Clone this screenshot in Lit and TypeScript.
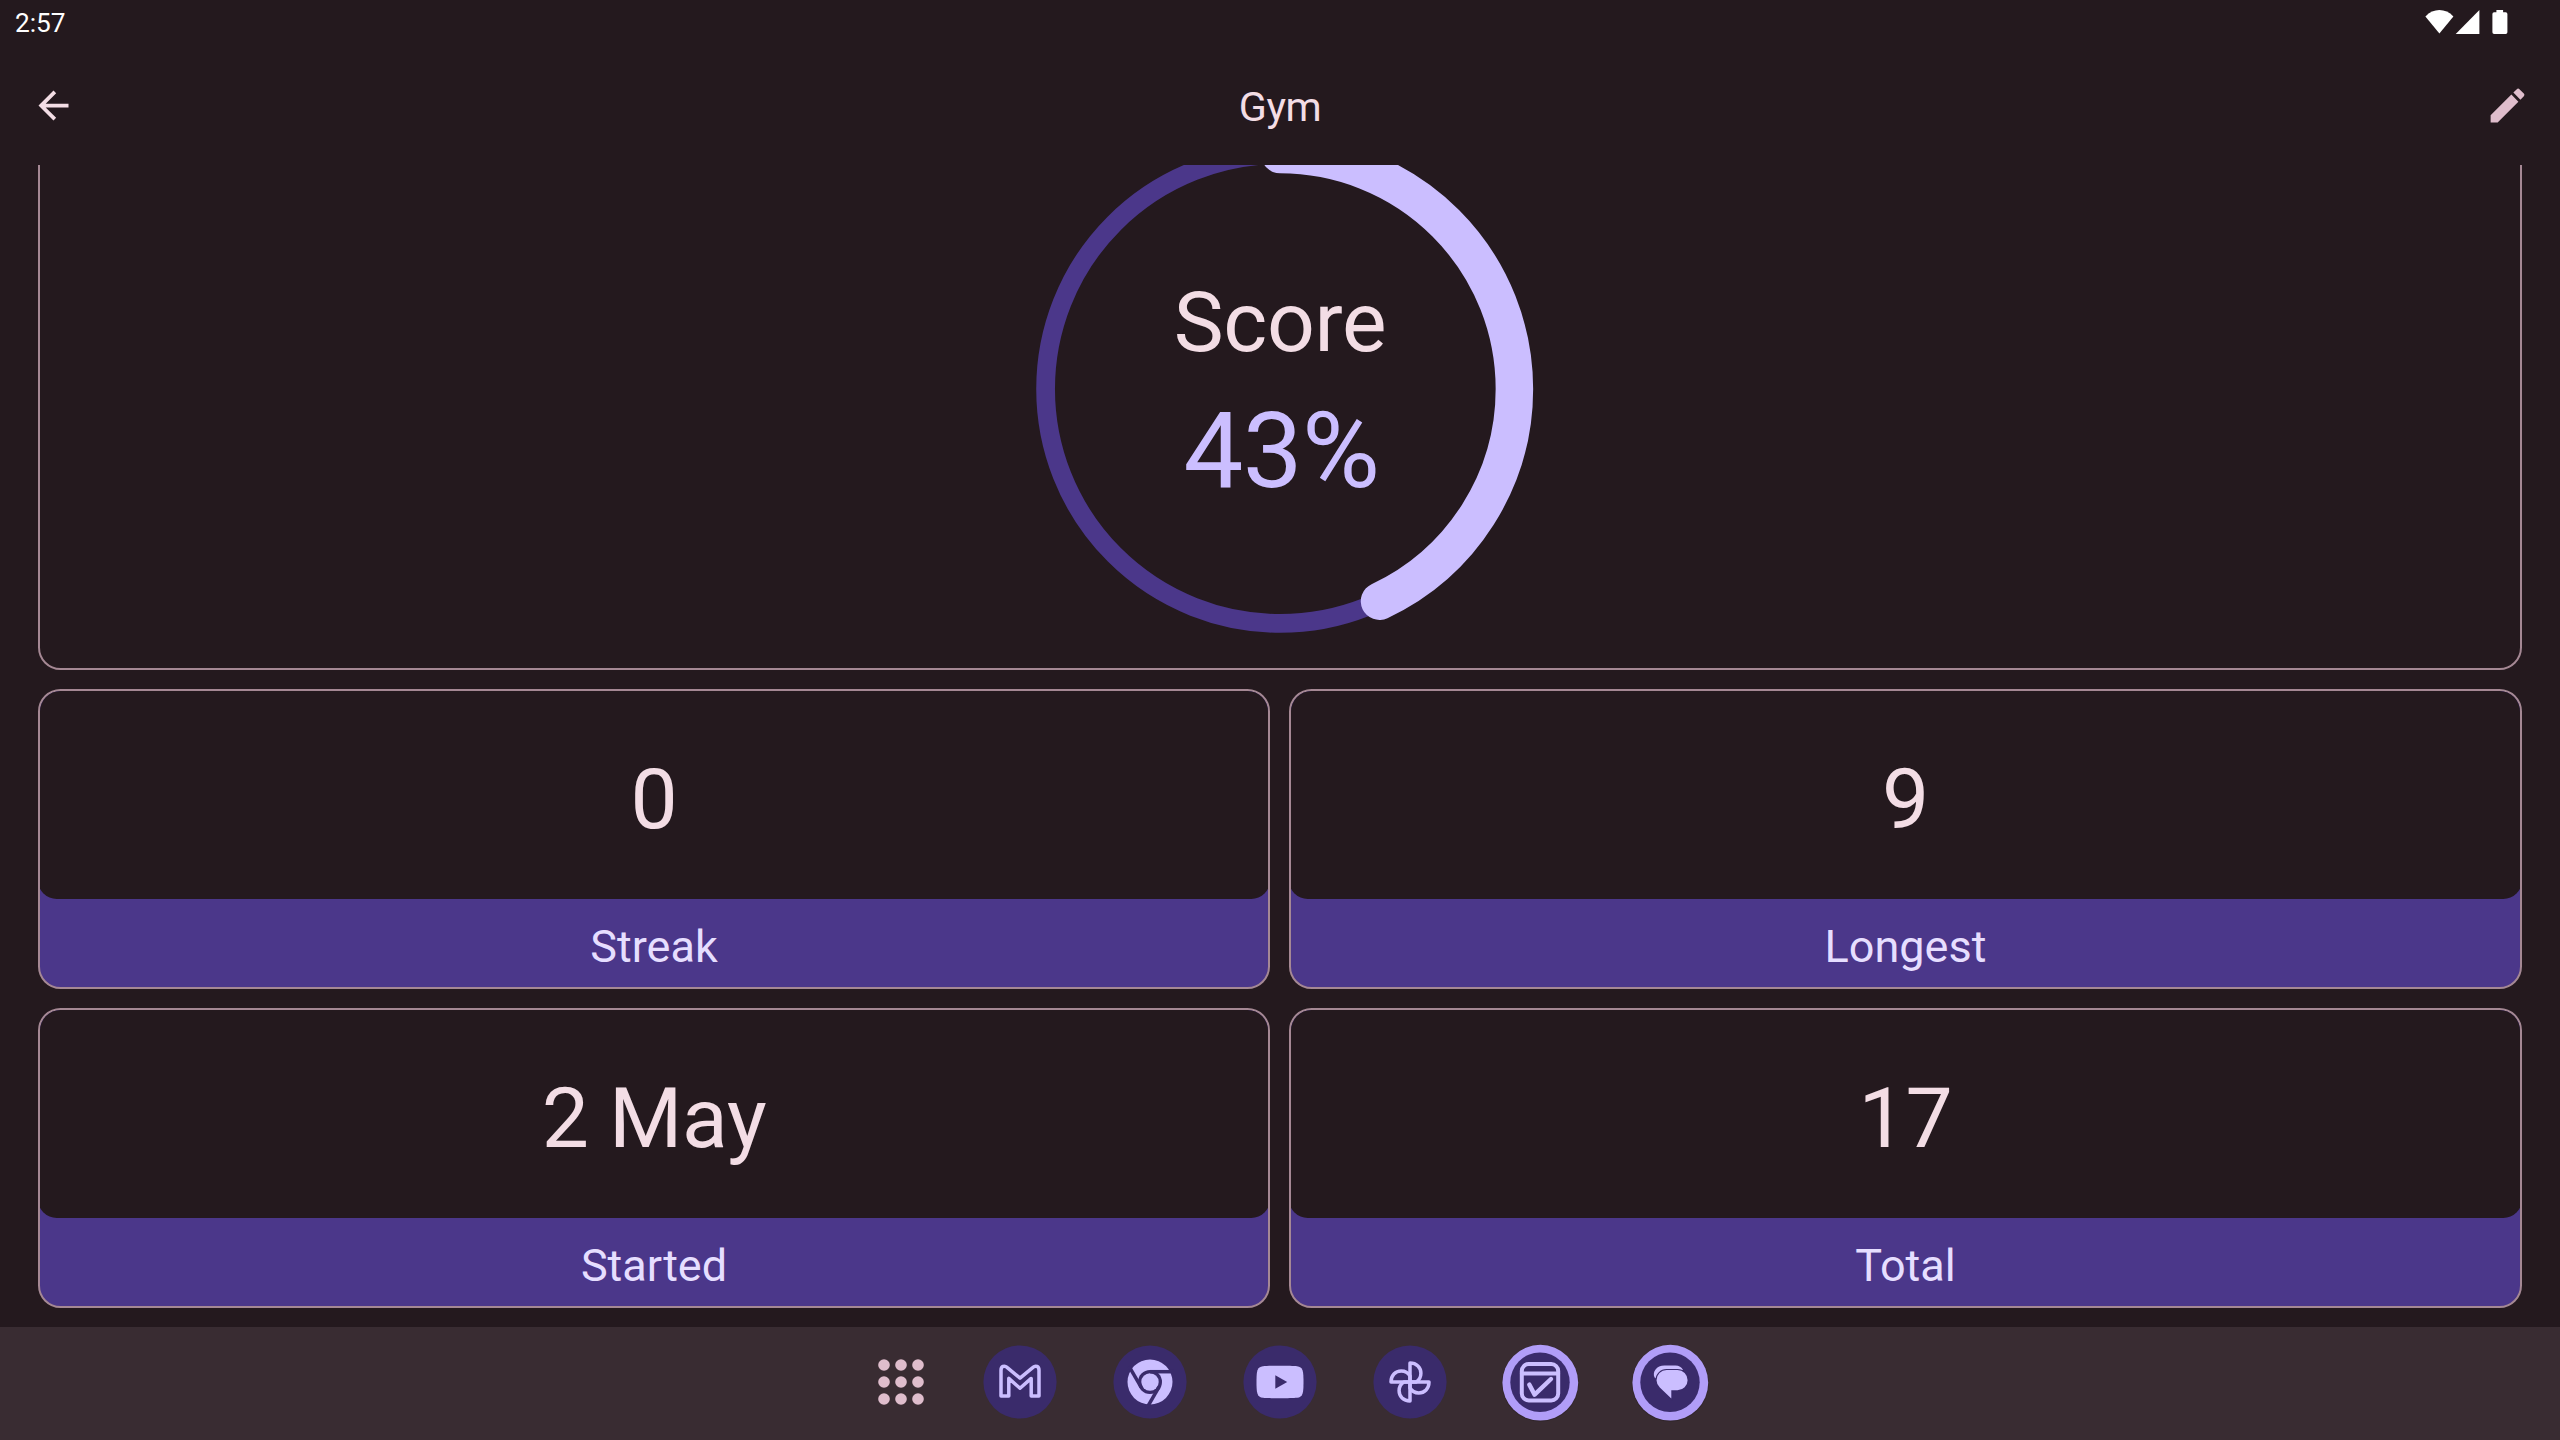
import { LitElement, html, css, svg } from "lit";
import { customElement, property } from "lit/decorators.js";

const SCORE = 0.43;
const RING_RADIUS = 234.4;
const RING_LENGTH = 2 * Math.PI * RING_RADIUS;

@customElement("stat-card")
class StatCard extends LitElement {
  @property() value = "";
  @property() label = "";

  static styles = css`
    :host {
      display: flex;
      flex-direction: column;
      box-sizing: border-box;
      height: 300px;
      border: 2px solid #a58894;
      border-radius: 22.5px;
      background: #4b378a;
      overflow: hidden;
      text-align: center;
    }
    .value {
      box-sizing: border-box;
      height: 210px;
      flex: none;
      margin: -2px -2px 0;
      padding-top: 62px;
      border-radius: 22.5px 22.5px 18.75px 18.75px;
      background: #24191e;
      color: #f3dde5;
      font-size: 84px;
      line-height: 98px;
      letter-spacing: -0.3px;
    }
    .label {
      padding-top: 18px;
      color: #e6deff;
      font-size: 45px;
      line-height: 60px;
    }
  `;

  render() {
    return html`
      <div class="value">${this.value}</div>
      <div class="label">${this.label}</div>
    `;
  }
}

@customElement("score-ring")
class ScoreRing extends LitElement {
  static styles = css`
    :host {
      display: grid;
      place-items: center;
    }
    .ring,
    .text {
      grid-area: 1 / 1;
    }
    .ring {
      display: block;
      width: 508px;
      height: 508px;
    }
    .text {
      text-align: center;
      padding-top: 18px;
    }
    .title {
      color: #f3dde5;
      font-size: 84px;
      line-height: 98px;
      letter-spacing: -0.3px;
    }
    .percent {
      color: #cbbeff;
      font-size: 106.5px;
      line-height: 140px;
      letter-spacing: -0.6px;
      padding: 9px 0 0 3px;
    }
  `;

  render() {
    return html`
      <svg class="ring" viewBox="-254 -254 508 508" fill="none">
        <circle r=${RING_RADIUS} stroke="#4b378a" stroke-width="18.75" />
        <circle
          r=${RING_RADIUS}
          stroke="#cbbeff"
          stroke-width="37.5"
          stroke-linecap="round"
          stroke-dasharray="${SCORE * RING_LENGTH} ${RING_LENGTH}"
          transform="rotate(-90)"
        />
      </svg>
      <div class="text">
        <div class="title">Score</div>
        <div class="percent">${Math.round(SCORE * 100)}%</div>
      </div>
    `;
  }
}

const LIGHT = "#cbbeff";
const DARK = "#3a2b6b";

const gmail = svg`
  <path d="M-19 13.9V-11.8C-19 -15.6 -15.6 -17 -13 -14.7L0 -3.9L13 -14.7C15.6 -17 19 -15.6 19 -11.8V13.9H11.2V-3.6L0 6.3L-11.2 -3.6V13.9Z"
    fill="none" stroke=${LIGHT} stroke-width="3.5" stroke-linejoin="round" />`;

const chrome = svg`
  <circle r="22.5" fill=${LIGHT} />
  <circle r="12" fill=${DARK} />
  <circle r="8.7" fill=${LIGHT} />
  <g stroke=${DARK} stroke-width="3.5">
    <path d="M0 -10.3H24" />
    <path d="M0 -10.3H24" transform="rotate(120)" />
    <path d="M0 -10.3H24" transform="rotate(240)" />
  </g>`;

const youtube = svg`
  <path d="M-23.5 0C-23.5 -11 -23 -15.2 -17 -15.8C-11 -16.4 11 -16.4 17 -15.8C23 -15.2 23.5 -11 23.5 0C23.5 11 23 15.2 17 15.8C11 16.4 -11 16.4 -17 15.8C-23 15.2 -23.5 11 -23.5 0Z" fill=${LIGHT} />
  <path d="M-4.7 -6.8L7.2 0L-4.7 6.8Z" fill=${DARK} />`;

const blade = "M0 0V-19C6.6 -19 10.9 -14.6 10.9 -8.8C10.9 -5 9 -1.8 6 0Z";
const photos = svg`
  <g fill="none" stroke=${LIGHT} stroke-width="3.5" stroke-linejoin="round">
    <path d=${blade} />
    <path d=${blade} transform="rotate(90)" />
    <path d=${blade} transform="rotate(180)" />
    <path d=${blade} transform="rotate(270)" />
  </g>`;

const habits = svg`
  <g fill="none" stroke=${LIGHT} stroke-width="4" stroke-linecap="round" stroke-linejoin="round">
    <rect x="-18.2" y="-18" width="36.4" height="36.4" rx="7" />
    <path d="M-18 -8.6H18" />
    <path d="M-10.7 2.6L-5.4 12.6L11 -3" stroke-width="4.4" />
  </g>`;

const messages = svg`
  <path d="M-15.4 -4.5C-18 -10 -13.5 -16.5 -5.5 -16.5H5.5C9 -16.5 11.6 -14.8 13 -12L-4 -9L-12 -2Z" fill=${LIGHT} />
  <path d="M-3.4 -11.9H7.5A10.1 10.1 0 0 1 7.5 8.3H1.3V16.4L-10.2 5.4Q-13.5 2 -13.5 -1.8A10.1 10.1 0 0 1 -3.4 -11.9Z"
    fill=${LIGHT} stroke=${DARK} stroke-width="2" paint-order="stroke" />`;

const dockApps = [
  { icon: gmail, running: false },
  { icon: chrome, running: false },
  { icon: youtube, running: false },
  { icon: photos, running: false },
  { icon: habits, running: true },
  { icon: messages, running: true },
];

const stats = [
  { value: "0", label: "Streak" },
  { value: "9", label: "Longest" },
  { value: "2 May", label: "Started" },
  { value: "17", label: "Total" },
];

@customElement("app-root")
class AppRoot extends LitElement {
  static styles = css`
    :host {
      display: flex;
      flex-direction: column;
      width: 2560px;
      height: 1440px;
      background: #24191e;
      font-family: Roboto, sans-serif;
      overflow: hidden;
    }
    svg {
      display: block;
    }
    .status {
      flex: none;
      box-sizing: border-box;
      height: 45px;
      display: flex;
      justify-content: space-between;
      padding: 7px 52px 0 15px;
      color: #fff;
      font-size: 26.25px;
      line-height: 32px;
    }
    .appbar {
      flex: none;
      box-sizing: border-box;
      height: 120px;
      display: flex;
      align-items: center;
      justify-content: space-between;
      padding: 0 30px 0 31px;
    }
    .title {
      color: #f3dde5;
      font-size: 41.25px;
      line-height: 52px;
      letter-spacing: -0.5px;
      padding: 3px 1px 0 0;
    }
    .content {
      flex: 1;
      min-height: 0;
      overflow: hidden;
      padding: 0 38px;
    }
    .grid {
      display: grid;
      grid-template-columns: 1232px 1fr;
      gap: 19px;
      margin-top: -58px;
    }
    .score {
      grid-column: 1 / -1;
      box-sizing: border-box;
      height: 563px;
      display: grid;
      place-items: center;
      border: 2px solid #a58894;
      border-radius: 22.5px;
    }
    .dock {
      flex: none;
      box-sizing: border-box;
      height: 113px;
      display: flex;
      align-items: center;
      justify-content: center;
      padding: 0 0 3px 21px;
      background: #392c32;
    }
    .slot {
      display: flex;
      justify-content: center;
      width: 130px;
    }
    .launcher {
      width: 108px;
    }
  `;

  render() {
    return html`
      <div class="status">
        <span>2:57</span>
        <svg width="84" height="30" viewBox="2423.6 7 84 30" fill="#fff">
          <path d="M2439 33.6L2425 16.4C2433 8 2445 8 2453 16.4Z" />
          <path d="M2479 10V34H2455.3Z" />
          <path d="M2496 10H2502.7V12.3H2505.3Q2507 12.3 2507 14V32.3Q2507 34 2505.3 34H2493.7Q2492 34 2492 32.3V14Q2492 12.3 2493.7 12.3H2496Z" />
        </svg>
      </div>
      <div class="appbar">
        <svg width="45" height="45" viewBox="0 0 24 24" fill="#f3dde5">
          <path d="M20 11H7.83l5.59-5.59L12 4l-8 8 8 8 1.41-1.41L7.83 13H20v-2z" />
        </svg>
        <div class="title">Gym</div>
        <svg width="45" height="45" viewBox="0 0 24 24" fill="#dfbdcc">
          <path d="M3 17.25V21h3.75L17.81 9.94l-3.75-3.75L3 17.25zM20.71 7.04c.39-.39.39-1.02 0-1.41l-2.34-2.34c-.39-.39-1.02-.39-1.41 0l-1.83 1.83 3.75 3.75 1.83-1.83z" />
        </svg>
      </div>
      <div class="content">
        <div class="grid">
          <div class="score"><score-ring></score-ring></div>
          ${stats.map((s) => html`<stat-card .value=${s.value} .label=${s.label}></stat-card>`)}
        </div>
      </div>
      <div class="dock">
        <div class="slot launcher">
          <svg width="46" height="46" viewBox="-23 -23 46 46" fill="#dfbdcc">
            ${[-17, 0, 17].map((y) => [-17, 0, 17].map((x) => svg`<circle cx=${x} cy=${y} r="5.8" />`))}
          </svg>
        </div>
        ${dockApps.map(
          (app) => html`
            <div class="slot">
              <svg width="80" height="80" viewBox="-40 -40 80 80">
                ${app.running
                  ? svg`<circle cx=".3" cy="1.2" r="38.6" fill="#000" opacity=".14" />
                      <circle cx=".3" cy=".7" r="37.9" fill="#b19df8" />
                      <circle cy=".3" r="29.7" fill=${DARK} />`
                  : svg`<circle r="36.6" fill=${DARK} />`}
                ${app.icon}
              </svg>
            </div>
          `,
        )}
      </div>
    `;
  }
}
